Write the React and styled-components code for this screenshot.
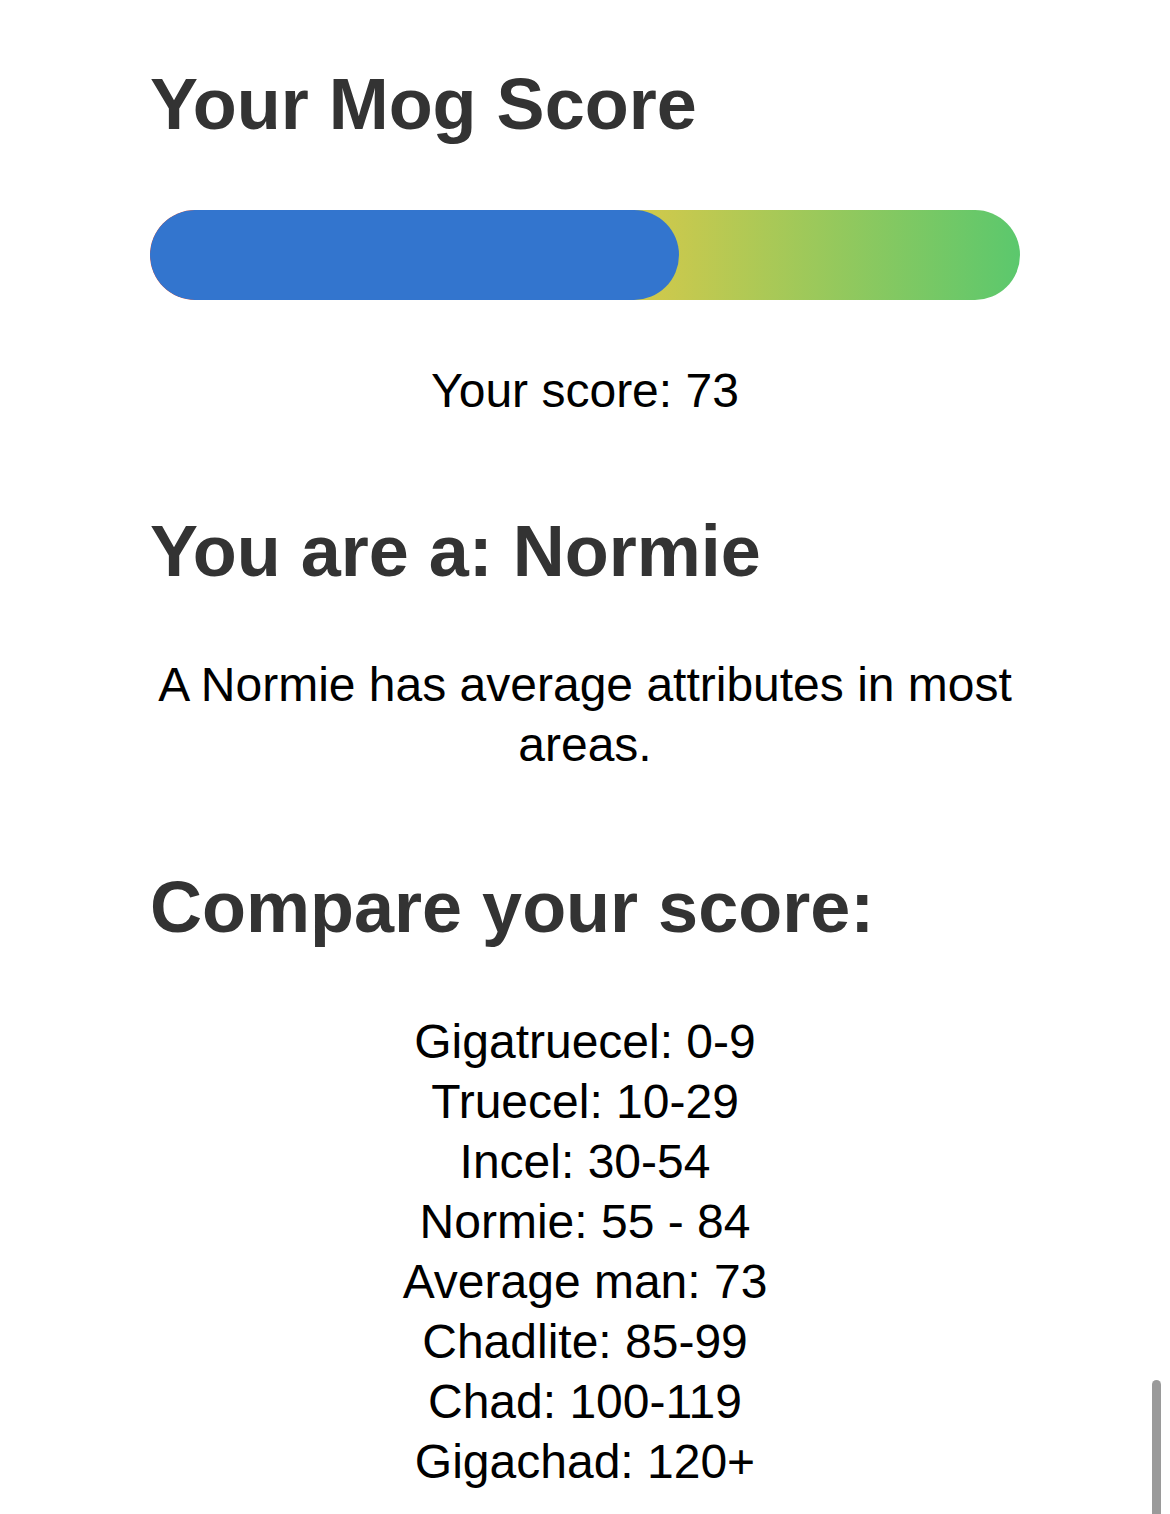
import React from "react";
import styled, { createGlobalStyle } from "styled-components";

const GlobalStyle = createGlobalStyle`
  html, body {
    margin: 0;
    padding: 0;
    background: #ffffff;
  }
  body {
    font-family: "Liberation Sans", Arial, Helvetica, sans-serif;
    color: #000;
  }
`;

const Page = styled.main`
  width: 870px;
  margin: 0 auto;
  padding-top: 62px;
  padding-bottom: 40px;
  display: flex;
  flex-direction: column;
`;

const Heading = styled.h2`
  margin: ${(p) => p.$top || 0}px 0 0;
  font-size: 72px;
  line-height: 84px;
  font-weight: 700;
  color: #333333;
`;

const Track = styled.div`
  margin-top: 64px;
  height: 90px;
  border-radius: 45px;
  background: linear-gradient(to right, #e5533d 0%, #d6c94a 55%, #5bc86d 100%);
  overflow: hidden;
`;

const Fill = styled.div`
  height: 100%;
  border-radius: 45px;
  background: #3375ce;
`;

const CenterText = styled.p`
  margin: ${(p) => p.$top || 0}px 0 0;
  font-size: 48px;
  line-height: 60px;
  text-align: center;
  color: #000;
`;

const RangeList = styled.div`
  margin-top: 63px;
  display: flex;
  flex-direction: column;
  align-items: center;
`;

const RangeRow = styled.div`
  font-size: 48px;
  line-height: 60px;
  color: #000;
`;

const ScrollThumb = styled.div`
  position: fixed;
  right: 9px;
  top: 1380px;
  width: 9px;
  height: 150px;
  border-radius: 5px;
  background: #9a9a9a;
`;

const score = 73;
const maxScore = 120;

const ranges = [
  "Gigatruecel: 0-9",
  "Truecel: 10-29",
  "Incel: 30-54",
  "Normie: 55 - 84",
  "Average man: 73",
  "Chadlite: 85-99",
  "Chad: 100-119",
  "Gigachad: 120+",
];

export default function App() {
  return (
    <>
      <GlobalStyle />
      <Page>
        <Heading>Your Mog Score</Heading>
        <Track>
          <Fill style={{ width: `${(score / maxScore) * 100}%` }} />
        </Track>
        <CenterText $top={61}>Your score: {score}</CenterText>
        <Heading $top={88}>You are a: Normie</Heading>
        <CenterText $top={62}>
          A Normie has average attributes in most areas.
        </CenterText>
        <Heading $top={90}>Compare your score:</Heading>
        <RangeList>
          {ranges.map((r) => (
            <RangeRow key={r}>{r}</RangeRow>
          ))}
        </RangeList>
      </Page>
      <ScrollThumb />
    </>
  );
}
